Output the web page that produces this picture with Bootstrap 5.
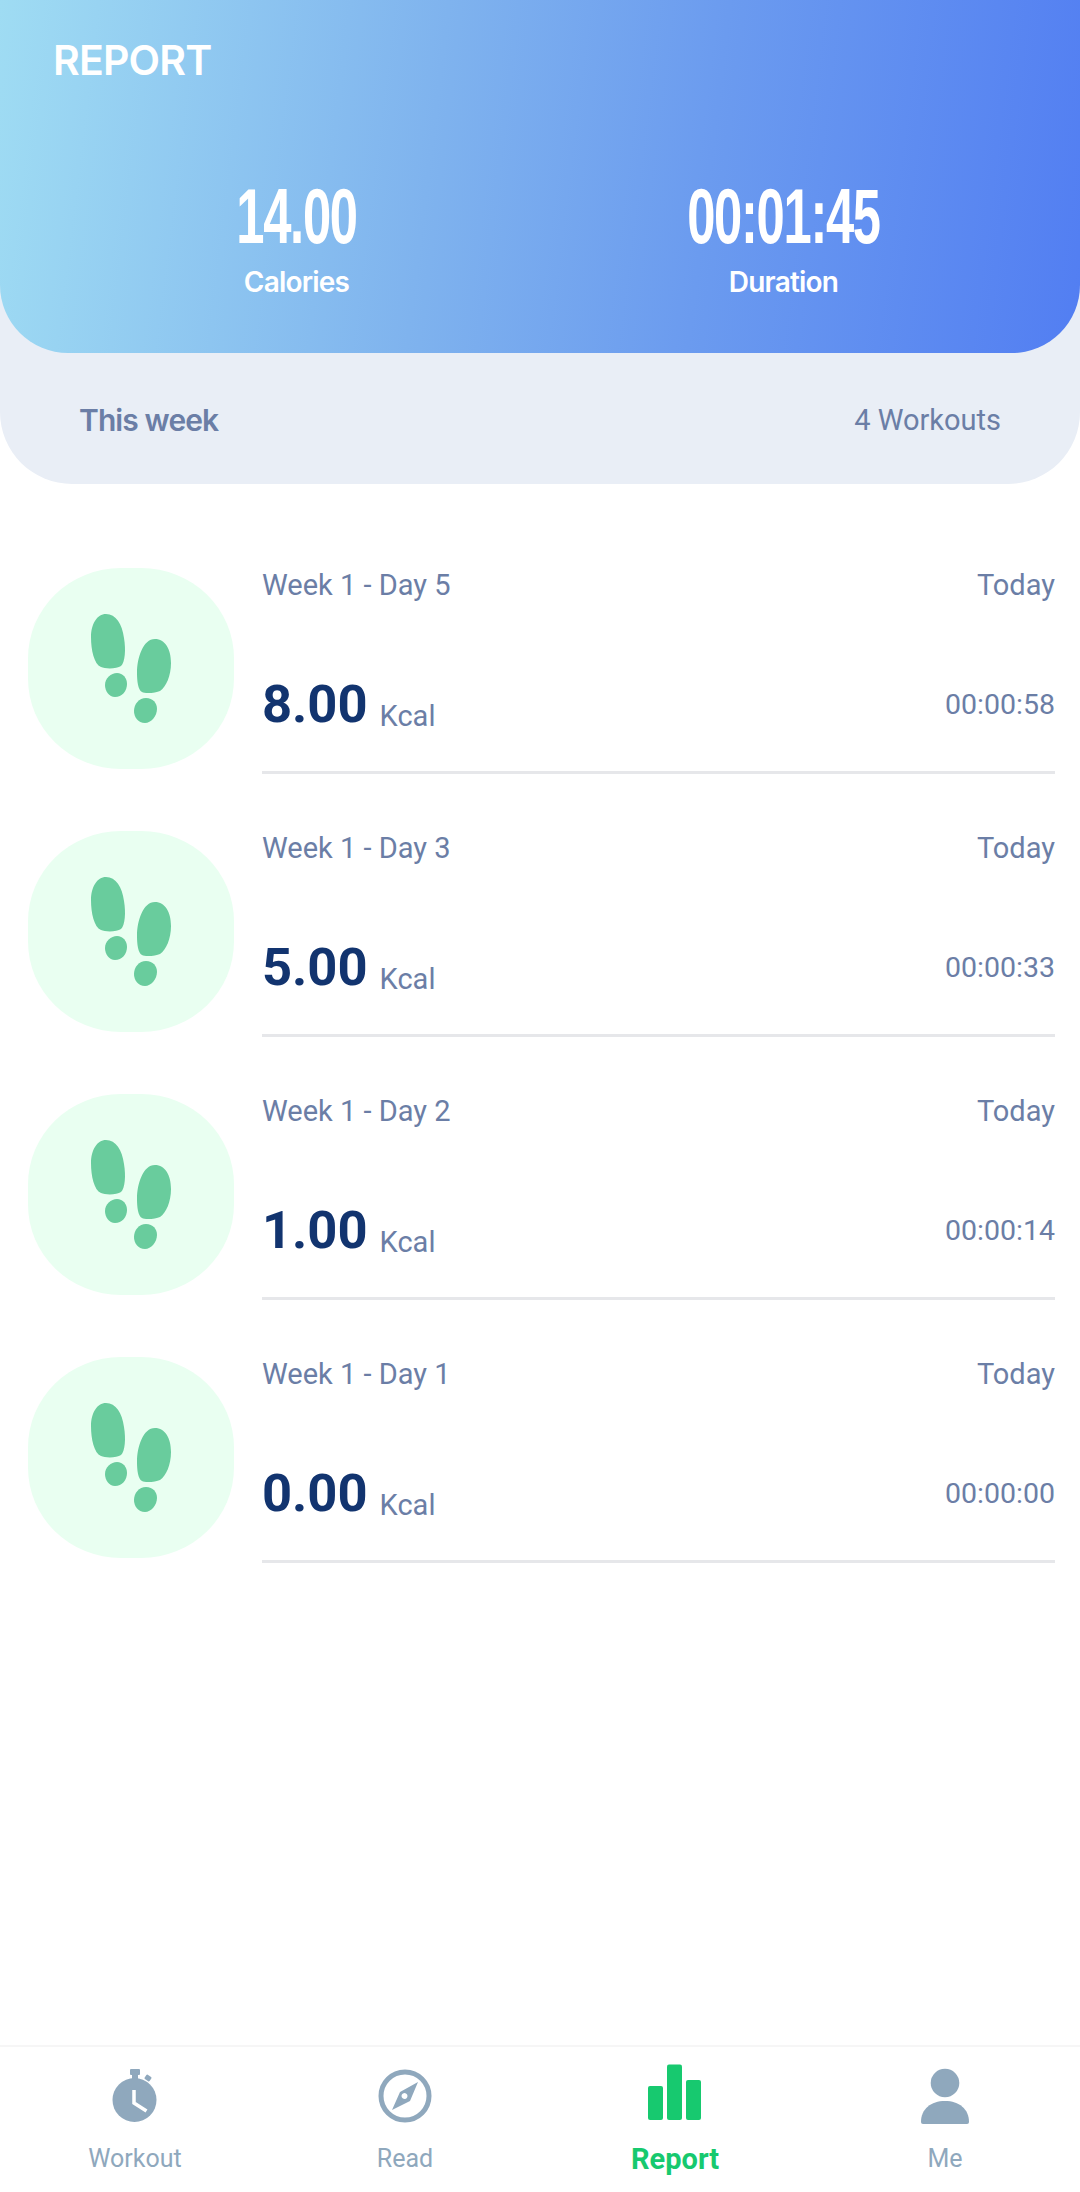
<!DOCTYPE html>
<html lang="en">
<head>
<meta charset="utf-8">
<title>Report</title>
<link rel="stylesheet" href="https://cdn.jsdelivr.net/npm/bootstrap@5.3.0/dist/css/bootstrap.min.css">
<style>
html,body{height:100%}
body{font-family:Roboto,"Liberation Sans",sans-serif;background:#fff;width:1080px;height:2192px;overflow:hidden}
.app-shell{height:2192px}
.summary-wrap{background:#e9eef6;border-radius:0 0 72px 72px;height:484px}
.summary-hero{height:353px;background:linear-gradient(97deg,#9fdcf3 0%,#7fb3ee 40%,#6b9bef 65%,#527ef2 100%);border-radius:0 0 68px 68px;color:#fff;padding:37px 53px 0}
.hero-title{font-family:Inter,"Liberation Sans",sans-serif;font-weight:600;font-size:41px;line-height:46px;letter-spacing:-.8px}
.hero-stats{margin-top:91px}
.stat-num{font-family:"Liberation Sans",sans-serif;font-weight:700;font-size:78px;line-height:84px;letter-spacing:-2px;transform:scaleX(.65)}
.stat-label{font-family:Inter,"Liberation Sans",sans-serif;font-weight:600;font-size:28px;line-height:34px;letter-spacing:-.8px;margin-top:7px}
.week-row{height:131px;padding:4px 79px 0;color:#6b7ea6}
.week-title{font-family:Inter,"Liberation Sans",sans-serif;font-weight:600;font-size:30px;letter-spacing:-.9px}
.week-count{font-size:29px}
.session-list{padding-top:84px}
.session-item{height:263px;padding:0 25px 0 28px}
.session-tile{width:206px;height:201px;flex:none;background:#e9fff1;border-radius:45%;display:block}
.session-body{border-bottom:3px solid #e6e7ea;height:206px;margin-left:28px;color:#6b7ea6}
.session-name,.session-day{font-size:29px;line-height:34px}
.session-stats{margin-bottom:33px}
.session-kcal{font-size:52.5px;font-weight:700;color:#12346f;line-height:64px}
.session-unit{font-size:29px;margin-left:12px;vertical-align:-4px}
.session-time{font-size:28.5px;line-height:34px}
.tab-bar{height:147px;border-top:2px solid #f6f6f6;color:#8fa8bd}
.tab-item{width:270px;height:100%}
.tab-icon{width:80px;height:72px;display:block}
.tab-text{font-size:25px;line-height:30px;margin-top:9px}
.tab-on{color:#17c96f;font-weight:700;font-size:29px}
</style>
</head>
<body>
<svg width="0" height="0" class="d-block">
  <symbol id="feet" viewBox="0 0 206 201">
    <path fill="#69cc9d" d="M78 46c10 0 16 10 18 24 2 12 1 24-3 28-4 3-16 3-20 1-7-3-10-17-10-30 0-13 6-23 15-23z"/>
    <path fill="#69cc9d" d="M89 105c6 0 10 5 10 11 0 7-5 13-12 13-6 0-10-6-10-12 0-7 6-12 12-12z"/>
    <path fill="#69cc9d" d="M127 71c10 0 16 10 16 24 0 13-5 24-11 28-4 2-15 3-18 1-4-2-5-11-5-19 0-15 6-34 18-34z"/>
    <path fill="#69cc9d" d="M118 130c7 0 11 5 11 11 0 7-6 14-12 14-7 0-11-6-11-12 0-7 5-13 12-13z"/>
  </symbol>
</svg>
<div class="app-shell d-flex flex-column">
  <section class="summary-wrap">
    <div class="summary-hero">
      <div class="hero-title">REPORT</div>
      <div class="row g-0 hero-stats text-center">
        <div class="col-6">
          <div class="stat-num">14.00</div>
          <div class="stat-label">Calories</div>
        </div>
        <div class="col-6">
          <div class="stat-num">00:01:45</div>
          <div class="stat-label">Duration</div>
        </div>
      </div>
    </div>
    <div class="week-row d-flex justify-content-between align-items-center">
      <span class="week-title">This week</span>
      <span class="week-count">4 Workouts</span>
    </div>
  </section>

  <main class="session-list flex-grow-1">
    <div class="session-item d-flex">
      <svg class="session-tile"><use href="#feet"/></svg>
      <div class="session-body flex-grow-1 d-flex flex-column justify-content-between">
        <div class="d-flex justify-content-between"><span class="session-name">Week 1 - Day 5</span><span class="session-day">Today</span></div>
        <div class="session-stats d-flex justify-content-between align-items-center"><span><span class="session-kcal">8.00</span><span class="session-unit">Kcal</span></span><span class="session-time">00:00:58</span></div>
      </div>
    </div>
    <div class="session-item d-flex">
      <svg class="session-tile"><use href="#feet"/></svg>
      <div class="session-body flex-grow-1 d-flex flex-column justify-content-between">
        <div class="d-flex justify-content-between"><span class="session-name">Week 1 - Day 3</span><span class="session-day">Today</span></div>
        <div class="session-stats d-flex justify-content-between align-items-center"><span><span class="session-kcal">5.00</span><span class="session-unit">Kcal</span></span><span class="session-time">00:00:33</span></div>
      </div>
    </div>
    <div class="session-item d-flex">
      <svg class="session-tile"><use href="#feet"/></svg>
      <div class="session-body flex-grow-1 d-flex flex-column justify-content-between">
        <div class="d-flex justify-content-between"><span class="session-name">Week 1 - Day 2</span><span class="session-day">Today</span></div>
        <div class="session-stats d-flex justify-content-between align-items-center"><span><span class="session-kcal">1.00</span><span class="session-unit">Kcal</span></span><span class="session-time">00:00:14</span></div>
      </div>
    </div>
    <div class="session-item d-flex">
      <svg class="session-tile"><use href="#feet"/></svg>
      <div class="session-body flex-grow-1 d-flex flex-column justify-content-between">
        <div class="d-flex justify-content-between"><span class="session-name">Week 1 - Day 1</span><span class="session-day">Today</span></div>
        <div class="session-stats d-flex justify-content-between align-items-center"><span><span class="session-kcal">0.00</span><span class="session-unit">Kcal</span></span><span class="session-time">00:00:00</span></div>
      </div>
    </div>
  </main>

  <nav class="tab-bar d-flex">
    <div class="tab-item d-flex flex-column align-items-center pt-3">
      <svg class="tab-icon" viewBox="0 0 80 72"><g fill="#8fa8bd"><rect x="35" y="6" width="10" height="6" rx="1"/><rect x="37" y="12" width="6" height="4"/><rect x="50" y="12.5" width="6" height="5" rx="1" transform="rotate(35 53 15)"/><circle cx="39.5" cy="37" r="22"/></g><path d="M39 27v13l12.500 8" fill="none" stroke="#fff" stroke-width="3.500"/></svg>
      <span class="tab-text">Workout</span>
    </div>
    <div class="tab-item d-flex flex-column align-items-center pt-3">
      <svg class="tab-icon" viewBox="0 0 80 72"><circle cx="40" cy="33" r="24" fill="none" stroke="#8fa8bd" stroke-width="5"/><path fill-rule="evenodd" fill="#8fa8bd" d="M53 19 45 38 27 47 35 29zM39.500 30a3 3 0 1 0 .01 0z"/></svg>
      <span class="tab-text">Read</span>
    </div>
    <div class="tab-item d-flex flex-column align-items-center pt-3">
      <svg class="tab-icon" viewBox="0 0 80 72"><g fill="#17c96f"><rect x="13" y="23" width="15" height="34" rx="2"/><rect x="32" y="1.500" width="15" height="55.500" rx="2"/><rect x="51" y="17" width="15" height="40" rx="2"/></g></svg>
      <span class="tab-text tab-on">Report</span>
    </div>
    <div class="tab-item d-flex flex-column align-items-center pt-3">
      <svg class="tab-icon" viewBox="0 0 80 72"><g fill="#8fa8bd"><circle cx="40" cy="20" r="14.300"/><path d="M16 59c0-13 10-21 24-21s24 8 24 21q0 2-2 2H18q-2 0-2-2z"/></g></svg>
      <span class="tab-text">Me</span>
    </div>
  </nav>
</div>
<script src="https://cdn.jsdelivr.net/npm/bootstrap@5.3.0/dist/js/bootstrap.bundle.min.js"></script>
</body>
</html>
